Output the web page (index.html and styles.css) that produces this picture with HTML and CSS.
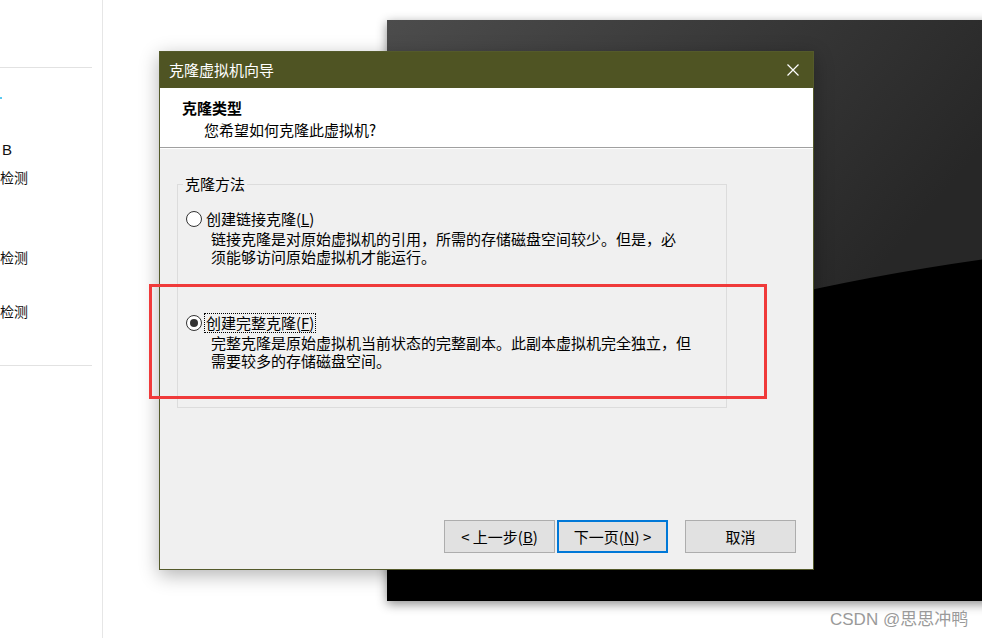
FILE: index.html
```html
<!DOCTYPE html>
<html lang="zh-CN">
<head>
<meta charset="utf-8">
<title>克隆虚拟机向导</title>
<link rel="stylesheet" href="styles.css">
</head>
<body>
<div class="desktop">
  <aside class="side">
    <div class="side-rule first"></div>
    <div class="side-tick"></div>
    <div class="side-line l-b">B</div>
    <div class="side-line l-1">检测</div>
    <div class="side-line l-2">检测</div>
    <div class="side-line l-3">检测</div>
    <div class="side-rule last"></div>
  </aside>

  <div class="vmwin">
    <svg class="vmwin-art" viewBox="0 0 620 581" width="620" height="581" preserveAspectRatio="none">
      <defs>
        <linearGradient id="g" x1="0" y1="0" x2="0.7" y2="0.55">
          <stop offset="0" stop-color="#4c4c4c"/>
          <stop offset="1" stop-color="#272727"/>
        </linearGradient>
      </defs>
      <rect width="620" height="581" fill="url(#g)"/>
      <path d="M0,420 Q250,285 620,236 L620,581 L0,581 Z" fill="#000"/>
    </svg>
  </div>

  <div class="dialog">
    <div class="titlebar">
      <span class="title">克隆虚拟机向导</span>
      <svg class="close" width="12" height="12" viewBox="0 0 12 12"><path d="M0.5 0.5 L11.5 11.5 M11.5 0.5 L0.5 11.5" stroke="#fff" stroke-width="1.2" fill="none"/></svg>
    </div>
    <div class="header">
      <div class="h-title">克隆类型</div>
      <div class="h-sub">您希望如何克隆此虚拟机?</div>
    </div>
    <div class="body">
      <fieldset class="group">
        <legend>克隆方法</legend>
        <div class="option">
          <div class="opt-row"><span class="radio"></span><span class="opt-label">创建链接克隆(<u>L</u>)</span></div>
          <div class="opt-desc">链接克隆是对原始虚拟机的引用，所需的存储磁盘空间较少。但是，必<br>须能够访问原始虚拟机才能运行。</div>
        </div>
        <div class="option second">
          <div class="opt-row"><span class="radio checked"></span><span class="opt-label focus">创建完整克隆(<u>F</u>)</span></div>
          <div class="opt-desc">完整克隆是原始虚拟机当前状态的完整副本。此副本虚拟机完全独立，但<br>需要较多的存储磁盘空间。</div>
        </div>
      </fieldset>
    </div>
    <div class="footer">
      <button class="btn">&lt; 上一步(<u>B</u>)</button>
      <button class="btn primary">下一页(<u>N</u>) &gt;</button>
      <button class="btn cancel">取消</button>
    </div>
  </div>

  <div class="highlight"></div>
  <div class="watermark">CSDN @思思冲鸭</div>
</div>
</body>
</html>
```
FILE: styles.css
```css
* { box-sizing: border-box; }
html, body { margin: 0; padding: 0; background: #fff; }
body {
  font-family: "Noto Sans CJK SC", "Noto Sans", "Liberation Sans", sans-serif;
  font-size: 15px;
  color: #000;
}
.desktop {
  position: relative;
  width: 982px;
  height: 638px;
  overflow: hidden;
  background: #fff;
}

/* left panel */
.side {
  width: 103px;
  height: 638px;
  border-right: 1px solid #e6e6e6;
  display: flex;
  flex-direction: column;
}
.side-rule {
  width: 92px;
  height: 1px;
  background: #e2e2e2;
}
.side-rule.first { margin-top: 67px; }
.side-rule.last { margin-top: 44px; }
.side-tick {
  width: 2px;
  height: 2px;
  background: #5ac8f0;
  margin-top: 29px;
}
.side-line {
  font-size: 14px;
  line-height: 20px;
  height: 20px;
  white-space: nowrap;
  color: #111;
}
.l-b { margin-top: 41px; padding-left: 2px; font-family: "Liberation Sans", sans-serif; font-size: 15px; }
.l-1 { margin-top: 7px; }
.l-2 { margin-top: 60px; }
.l-3 { margin-top: 34px; }

/* background vm window */
.vmwin {
  position: absolute;
  left: 387px;
  top: 20px;
  width: 620px;
  height: 581px;
  box-shadow: 0 3px 10px rgba(0, 0, 0, 0.45);
  background: #000;
}
.vmwin-art { display: block; }

/* dialog */
.dialog {
  position: absolute;
  left: 159px;
  top: 51px;
  width: 655px;
  height: 519px;
  border: 1px solid #545a2a;
  background: #f0f0f0;
  display: flex;
  flex-direction: column;
  box-shadow: 0 5px 18px rgba(0, 0, 0, 0.3);
}
.titlebar {
  height: 36px;
  flex: none;
  background: #4f5423;
  color: #fff;
  display: flex;
  align-items: center;
  justify-content: space-between;
  padding: 0 14px 0 9px;
}
.title { font-size: 15px; line-height: 20px; }
.close { display: block; }

.header {
  height: 60px;
  flex: none;
  background: #fff;
  border-bottom: 1px solid #a0a0a0;
  padding: 10px 0 0 22px;
}
.h-title { font-weight: bold; line-height: 20px; }
.h-sub { line-height: 20px; margin-top: 2px; padding-left: 22px; }

.body {
  flex: 1;
  border-top: 1px solid #fff;
  padding: 26px 0 0 17px;
}
.group {
  margin: 0;
  width: 550px;
  height: 233px;
  border: 1px solid #dcdcdc;
  padding: 16px 0 0 8px;
  min-inline-size: 0;
}
.group legend {
  margin-left: -3px;
  padding: 0 2px;
  line-height: 18px;
  font-size: 15px;
}
.opt-row {
  display: flex;
  align-items: center;
  height: 20px;
}
.radio {
  width: 16px;
  height: 16px;
  border: 1px solid #333;
  border-radius: 50%;
  background: #fff;
  margin-right: 4px;
  display: flex;
  align-items: center;
  justify-content: center;
  flex: none;
}
.radio.checked::after {
  content: "";
  width: 8px;
  height: 8px;
  border-radius: 50%;
  background: #333;
}
.opt-label { line-height: 18px; white-space: nowrap; }
.opt-label.focus { outline: 1px dotted #000; outline-offset: 0; margin-left: -1px; padding: 0 1px; }
.opt-desc {
  margin-top: 1px;
  padding-left: 25px;
  line-height: 18px;
  white-space: nowrap;
}
.option.second { margin-top: 47px; }

.footer {
  flex: none;
  display: flex;
  justify-content: flex-end;
  padding: 0 17px 16px 0;
}
.btn {
  width: 111px;
  height: 33px;
  border: 1px solid #adadad;
  background: #e1e1e1;
  font-family: "Noto Sans CJK SC", "Noto Sans", sans-serif;
  font-size: 15px;
  color: #000;
  padding: 0;
  margin: 0;
  line-height: 20px;
}
.btn.primary { border: 2px solid #0078d7; margin-left: 2px; }
.btn.cancel { margin-left: 17px; }

/* annotation overlay */
.highlight {
  position: absolute;
  left: 149px;
  top: 284px;
  width: 618px;
  height: 115px;
  border: 3px solid #f03a3a;
}
.watermark {
  position: absolute;
  left: 830px;
  top: 609px;
  font-family: "Liberation Sans", "Noto Sans CJK SC", sans-serif;
  font-size: 17px;
  line-height: 22px;
  color: #9a9a9a;
  white-space: nowrap;
}
```
